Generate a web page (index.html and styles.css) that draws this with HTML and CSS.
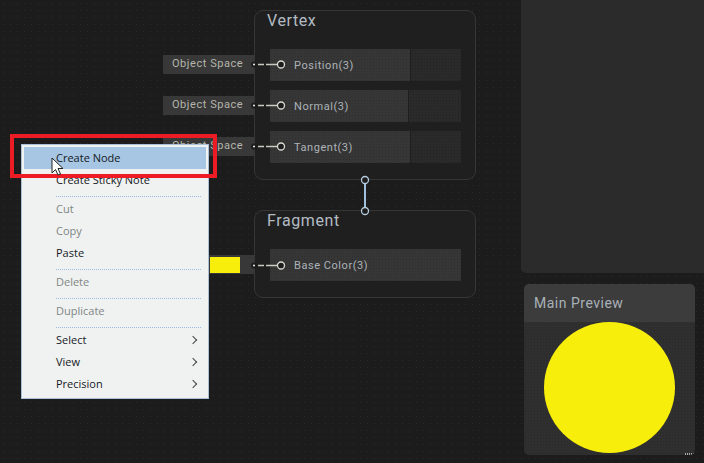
FILE: index.html
```html
<!DOCTYPE html>
<html lang="en">

<head>
    <meta charset="UTF-8">
    <meta name="viewport" content="width=device-width, initial-scale=1.0">
    <title>Shader Graph</title>
    <link rel="stylesheet" href="styles.css">
</head>

<body>
    <div class="canvas">
        <div class="side-panel"></div>

        <div class="chip chip-position">Object Space</div>
        <div class="chip chip-normal">Object Space</div>
        <div class="chip chip-tangent">Object Space</div>
        <div class="chip chip-color"><span class="swatch"></span></div>

        <section class="node node-vertex">
            <h2>Vertex</h2>
            <div class="slot"><span class="slot-name">Position(3)</span><span class="slot-end"></span></div>
            <div class="slot slot-short"><span class="slot-name">Normal(3)</span><span class="slot-end"></span></div>
            <div class="slot"><span class="slot-name">Tangent(3)</span><span class="slot-end"></span></div>
        </section>

        <section class="node node-fragment">
            <h2>Fragment</h2>
            <div class="slot"><span class="slot-name">Base Color(3)</span></div>
        </section>

        <!-- wires and ports -->
        <svg class="wires" width="704" height="463" viewBox="0 0 704 463">
            <g class="wire">
                <path d="M258 64.5h6M266 64.5h11" />
                <path d="M258 105.5h6M266 105.5h11" />
                <path d="M258 146.5h6M266 146.5h11" />
                <path d="M258 265.5h6M266 265.5h11" />
            </g>
            <g class="port">
                <circle cx="281" cy="64.5" r="3.5" />
                <circle cx="281" cy="105.5" r="3.5" />
                <circle cx="281" cy="146.5" r="3.5" />
                <circle cx="281" cy="265.5" r="3.5" />
            </g>
            <g class="dot">
                <circle cx="254" cy="64.5" r="2" />
                <circle cx="254" cy="105.5" r="2" />
                <circle cx="254" cy="146.5" r="2" />
                <circle cx="254" cy="265.5" r="2" />
            </g>
            <path class="flow" d="M365 184v23" />
            <circle class="flow-port" cx="365" cy="180" r="3.5" />
            <circle class="flow-port" cx="365" cy="211" r="3.5" />
        </svg>

        <section class="preview">
            <h3>Main Preview</h3>
            <div class="preview-body">
                <div class="sphere"></div>
                <span class="grip"></span>
            </div>
        </section>

        <ul class="menu">
            <li class="active">Create Node</li>
            <li>Create Sticky Note</li>
            <li class="sep"></li>
            <li class="off">Cut</li>
            <li class="off">Copy</li>
            <li>Paste</li>
            <li class="sep"></li>
            <li class="off">Delete</li>
            <li class="sep"></li>
            <li class="off">Duplicate</li>
            <li class="sep"></li>
            <li class="sub">Select</li>
            <li class="sub">View</li>
            <li class="sub">Precision</li>
        </ul>

        <div class="highlight-box"></div>

        <svg class="cursor" width="14" height="19" viewBox="0 0 14 19">
            <path d="M1 1v15l3.5-3.5 2.5 5.5 2.5-1-2.5-5.5h5z" />
        </svg>
    </div>
</body>

</html>
```

FILE: styles.css
```css
* {
    box-sizing: border-box;
}

body {
    margin: 0;
    overflow: hidden;
    background: #1c1c1c;
    font-family: "Roboto", "Liberation Sans", sans-serif;
}

.canvas {
    position: relative;
    width: 704px;
    height: 463px;
    overflow: hidden;
    background-color: #1c1c1c;
    background-image: radial-gradient(#2b2b2b 0.6px, transparent 0.8px);
    background-size: 7px 7px;
}

.side-panel {
    position: absolute;
    left: 521px;
    top: -8px;
    width: 191px;
    height: 281px;
    border-radius: 5px;
    background: #2b2b2b;
}

/* graph nodes */
.node {
    position: absolute;
    left: 254px;
    width: 222px;
    padding: 0 14px 0 15px;
    border: 1px solid #363636;
    border-radius: 9px;
    background: #1f1f1f;
}

.node-vertex {
    top: 10px;
    height: 170px;
}

.node-fragment {
    top: 210px;
    height: 88px;
}

.node h2 {
    height: 38px;
    margin: 0;
    padding: 11px 0 0 -3px;
    margin-left: -3px;
    color: #b3bcc4;
    font-size: 16px;
    font-weight: 400;
    line-height: 20px;
    letter-spacing: 0.6px;
}

.slot {
    display: flex;
    height: 32px;
    margin-bottom: 9px;
    background-color: #363636;
    background-image: radial-gradient(#2e2e2e 0.6px, transparent 0.8px);
    background-size: 3px 3px;
}

.slot-name {
    flex: 1;
    padding: 10px 0 0 24px;
    color: #adb3b8;
    font-size: 11px;
    line-height: 13px;
    letter-spacing: 0.55px;
}

.slot-end {
    width: 51px;
    border-left: 1px solid #1f1f1f;
    background-color: #2a2a2a;
    background-image: radial-gradient(#232323 0.6px, transparent 0.8px);
    background-size: 3px 3px;
}

.slot-short .slot-end {
    width: 53px;
}

.chip {
    position: absolute;
    left: 163px;
    width: 101px;
    height: 19px;
    padding-left: 9px;
    background: #383838;
    color: #b5b5ac;
    font-size: 11px;
    line-height: 17px;
    letter-spacing: 0.55px;
}

.chip-position {
    top: 55px;
}

.chip-normal {
    top: 96px;
}

.chip-tangent {
    top: 137px;
}

.chip-color {
    top: 255px;
    left: 207px;
    width: 57px;
    padding: 2px 0 0 3px;
}

.swatch {
    display: block;
    width: 30px;
    height: 16px;
    background: #f8ee0c;
}

/* wires */
.wires {
    position: absolute;
    left: 0;
    top: 0;
}

.wire path {
    fill: none;
    stroke: #c9c9c0;
    stroke-width: 1.5;
}

.port circle {
    fill: #1c1c1c;
    stroke: #dcdcd4;
    stroke-width: 1.3;
}

.dot circle {
    fill: #f4f4f4;
    stroke: #1c1c1c;
    stroke-width: 2;
}

.flow {
    fill: none;
    stroke: #9fc0de;
    stroke-width: 2;
}

.flow-port {
    fill: #1c1c1c;
    stroke: #b6cde0;
    stroke-width: 1.3;
}

/* preview window */
.preview {
    position: absolute;
    left: 524px;
    top: 284px;
    width: 171px;
    height: 171px;
    overflow: hidden;
    border-radius: 5px;
    background-color: #2f2f2f;
    background-image: radial-gradient(#292929 0.6px, transparent 0.8px);
    background-size: 3px 3px;
}

.preview h3 {
    height: 38px;
    margin: 0;
    padding: 11px 0 0 10px;
    background: #3c3c3c;
    color: #a9b1b8;
    font-size: 14px;
    font-weight: 400;
    line-height: 16px;
    letter-spacing: 0.5px;
}

.preview-body {
    position: relative;
    display: flex;
    justify-content: center;
    padding-right: 1px;
}

.sphere {
    width: 131px;
    height: 131px;
    border-radius: 50%;
    background: #f8ee0c;
}

.grip {
    position: absolute;
    right: 0;
    bottom: -2px;
    width: 10px;
    height: 2px;
    background-image: repeating-linear-gradient(90deg, #a8a8a8 0 1px, transparent 1px 2px);
}

/* context menu */
.menu {
    position: absolute;
    left: 21px;
    top: 144px;
    width: 188px;
    height: 255px;
    margin: 0;
    padding: 2px;
    list-style: none;
    border: 1px solid #a9c0d6;
    background: #f0f2f2;
    color: #15191e;
    font-family: "Open Sans", "Noto Sans", sans-serif;
    font-size: 11px;
}

.menu li {
    height: 22px;
    padding-left: 32px;
    line-height: 22px;
}

.menu li.active {
    background: #a6c6e3;
}

.menu li.off {
    color: #7f8684;
}

.menu li.sep {
    height: 7px;
    margin: 0 5px 0 32px;
    padding: 0;
    border-bottom: 1px dotted #9dbde0;
    transform: translateY(-1px);
}

.menu li.sep + li {
    margin-top: 0;
}

.menu li.sub {
    position: relative;
}

.menu li.sub::after {
    content: "";
    position: absolute;
    right: 10px;
    top: 8px;
    width: 5px;
    height: 5px;
    border-top: 1px solid #444;
    border-right: 1px solid #444;
    transform: rotate(45deg);
}

/* red box drawn over the screenshot */
.highlight-box {
    position: absolute;
    left: 10px;
    top: 134px;
    width: 207px;
    height: 44px;
    border: 4px solid #ed1c24;
}

.cursor {
    position: absolute;
    left: 51px;
    top: 157px;
}

.cursor path {
    fill: #fff;
    stroke: #222;
    stroke-width: 1;
}
```
